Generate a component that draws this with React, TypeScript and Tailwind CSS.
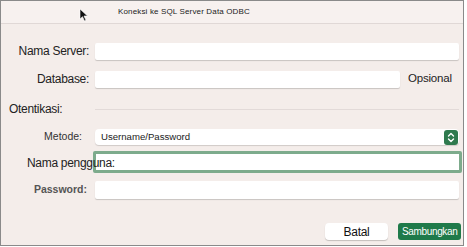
import React from "react";

const font = { fontFamily: '"Liberation Sans", Arial, sans-serif' };

function Field({ w = "w-[364px]" }: { w?: string }) {
  return (
    <div
      className={`${w} h-[17px] bg-white rounded-[2px] shadow-[0_1px_1px_rgba(0,0,0,0.18)]`}
    />
  );
}

function Stepper() {
  return (
    <div className="w-[14px] h-[15px] rounded-[3px] bg-[#2f7a4e] flex items-center justify-center">
      <svg width="8" height="11" viewBox="0 0 8 11" fill="none">
        <path d="M1.5 4 L4 1.5 L6.5 4" stroke="white" strokeWidth="1.4" strokeLinecap="round" strokeLinejoin="round" />
        <path d="M1.5 7 L4 9.5 L6.5 7" stroke="white" strokeWidth="1.4" strokeLinecap="round" strokeLinejoin="round" />
      </svg>
    </div>
  );
}

export default function App() {
  return (
    <div className="w-[467px] h-[247px] bg-white" style={font}>
      <div className="w-[464px] h-[246px] border border-[#8a8a8a] bg-[#f4edea] flex flex-col overflow-hidden">
        {/* Title bar */}
        <div className="h-[23px] border-b border-[#e0d8d6] bg-[#f7f1ef] flex items-center pl-[117px] relative">
          <svg className="absolute left-[78px] top-[7px]" width="10" height="14" viewBox="0 0 10 14">
            <path d="M1 1 L1 11 L3.5 8.7 L5.5 13 L7 12.3 L5 8 L8.5 8 Z" fill="#111" stroke="white" strokeWidth="0.6" />
          </svg>
          <span className="text-[8px] text-[#222] tracking-[0.15px]">Koneksi ke SQL Server Data ODBC</span>
        </div>

        {/* Server rows */}
        <div className="mt-[18px] flex items-center">
          <div className="w-[88px] text-right text-[12px] text-[#222] tracking-[-0.3px]">Nama Server:</div>
          <div className="ml-[6px]">
            <Field />
          </div>
        </div>
        <div className="mt-[10px] flex items-center">
          <div className="w-[88px] text-right text-[12px] text-[#222] tracking-[-0.3px]">Database:</div>
          <div className="ml-[6px]">
            <Field w="w-[305px]" />
          </div>
          <span className="ml-[8px] text-[11.5px] text-[#222] tracking-[-0.2px]">Opsional</span>
        </div>

        {/* Authentication */}
        <div className="mt-[14px] flex items-center h-[14px]">
          <span className="ml-[8px] w-[80px] text-[12px] text-[#222] tracking-[-0.3px]">Otentikasi:</span>
          <div className="ml-[6px] w-[364px] h-px bg-[#e2dad8]" />
        </div>

        <div className="mt-[13px] flex items-center">
          <div className="w-[82px] text-right text-[10.5px] text-[#333] pr-[1px]">Metode:</div>
          <div className="ml-[12px] w-[364px] h-[16px] bg-white rounded-[4px] shadow-[0_1px_1px_rgba(0,0,0,0.15)] flex items-center justify-between pl-[6px] pr-[1px]">
            <span className="text-[9.6px] text-[#222]">Username/Password</span>
            <Stepper />
          </div>
        </div>

        <div className="mt-[5px] flex items-center">
          <div className="w-[92px] relative z-10">
            <span className="ml-[26px] whitespace-nowrap text-[12px] text-[#222] tracking-[-0.3px]">Nama pengguna:</span>
          </div>
          <div className="w-[369px] h-[22px] bg-white rounded-[2px] border-[3px] border-[#7dab8c]" />
        </div>

        <div className="mt-[7px] flex items-center">
          <div className="w-[87px] text-right text-[10.5px] font-bold text-[#555] pr-[1px]">Password:</div>
          <div className="ml-[7px]">
            <Field w="w-[364px] h-[18px]" />
          </div>
        </div>

        {/* Buttons */}
        <div className="mt-[24px] flex items-center">
          <div className="ml-[324px] w-[63px] h-[17px] bg-white rounded-[4px] shadow-[0_1px_1px_rgba(0,0,0,0.2)] flex items-center justify-center">
            <span className="text-[12px] text-[#111] tracking-[-0.3px]">Batal</span>
          </div>
          <div className="ml-[10px] w-[63px] h-[17px] bg-[#1f7a4a] rounded-[3px] flex items-center pl-[4px]">
            <span className="whitespace-nowrap text-[10px] text-white tracking-[-0.35px]">Sambungkan</span>
          </div>
        </div>
      </div>
    </div>
  );
}
